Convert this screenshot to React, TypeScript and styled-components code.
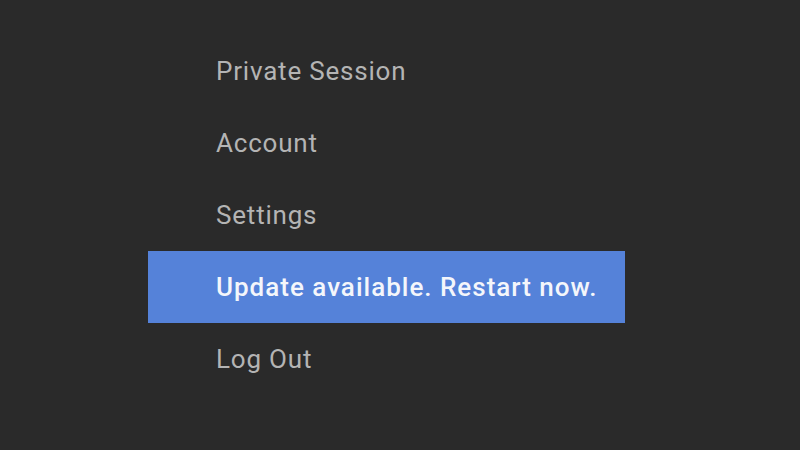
import React from "react";
import styled, { createGlobalStyle } from "styled-components";

const Global = createGlobalStyle`
  html, body { margin: 0; padding: 0; background: #2a2a2a; }
  body { width: 800px; height: 450px; overflow: hidden; }
`;

const Page = styled.div`
  width: 800px;
  height: 450px;
  background: #2a2a2a;
  padding-top: 35px;
  padding-left: 148px;
  box-sizing: border-box;
`;

const Menu = styled.ul`
  list-style: none;
  margin: 0;
  padding: 0;
  width: 477px;
  display: flex;
  flex-direction: column;
`;

const Item = styled.li<{ $active?: boolean }>`
  height: 72px;
  display: flex;
  align-items: center;
  padding-left: 68px;
  padding-bottom: 1px;
  box-sizing: border-box;
  font-family: Roboto, "Liberation Sans", sans-serif;
  font-size: 26px;
  font-weight: ${(p) => (p.$active ? 500 : 400)};
  color: ${(p) => (p.$active ? "#f4f6fb" : "#b4b4b4")};
  background: ${(p) => (p.$active ? "#5582d9" : "transparent")};
  letter-spacing: ${(p) => (p.$active ? "1px" : "0.8px")};
`;

const items = [
  { label: "Private Session" },
  { label: "Account" },
  { label: "Settings" },
  { label: "Update available. Restart now.", active: true },
  { label: "Log Out" },
];

export default function App() {
  return (
    <>
      <Global />
      <Page>
        <Menu>
          {items.map((it) => (
            <Item key={it.label} $active={it.active}>
              {it.label}
            </Item>
          ))}
        </Menu>
      </Page>
    </>
  );
}
